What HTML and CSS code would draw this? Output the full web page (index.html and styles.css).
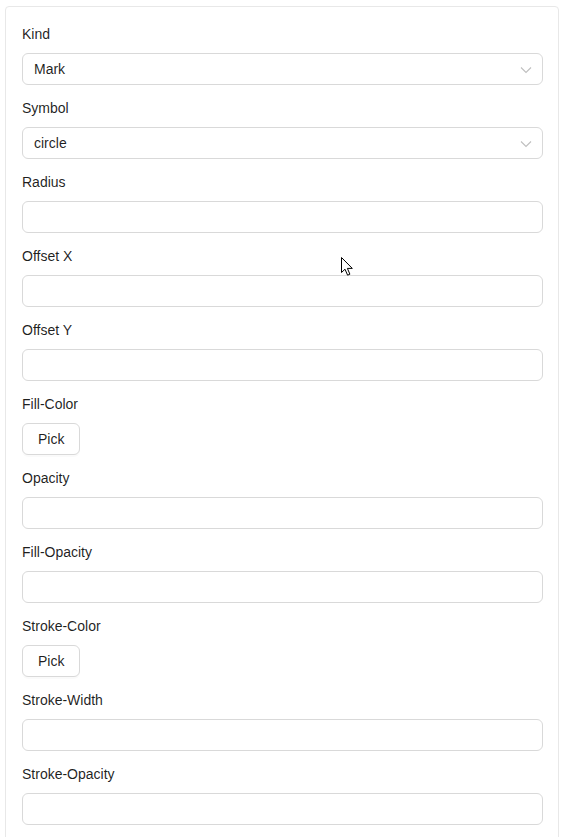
FILE: index.html
```html
<!DOCTYPE html>
<html>
<head>
<meta charset="utf-8">
<link rel="stylesheet" href="styles.css">
</head>
<body>
<div class="page">
  <form class="card">
    <div class="field">
      <label class="label">Kind</label>
      <div class="select"><span>Mark</span><svg class="chev" width="12" height="8" viewBox="0 0 12 8"><path d="M1 1.5 L6 6.5 L11 1.5" fill="none" stroke="#bfbfbf" stroke-width="1.1"/></svg></div>
    </div>
    <div class="field">
      <label class="label">Symbol</label>
      <div class="select"><span>circle</span><svg class="chev" width="12" height="8" viewBox="0 0 12 8"><path d="M1 1.5 L6 6.5 L11 1.5" fill="none" stroke="#bfbfbf" stroke-width="1.1"/></svg></div>
    </div>
    <div class="field"><label class="label">Radius</label><input class="input" type="text"></div>
    <div class="field"><label class="label">Offset X</label><input class="input" type="text"></div>
    <div class="field"><label class="label">Offset Y</label><input class="input" type="text"></div>
    <div class="field"><label class="label">Fill-Color</label><div><button type="button" class="btn">Pick</button></div></div>
    <div class="field"><label class="label">Opacity</label><input class="input" type="text"></div>
    <div class="field"><label class="label">Fill-Opacity</label><input class="input" type="text"></div>
    <div class="field"><label class="label">Stroke-Color</label><div><button type="button" class="btn">Pick</button></div></div>
    <div class="field"><label class="label">Stroke-Width</label><input class="input" type="text"></div>
    <div class="field"><label class="label">Stroke-Opacity</label><input class="input" type="text"></div>
  </form>
  <svg class="cursor" width="14" height="20" viewBox="0 0 14 20"><path d="M0.5 0.5 L0.5 15.5 L4 12.2 L6.6 18.2 L8.9 17.2 L6.4 11.4 L11.3 11.4 Z" fill="#fff" stroke="#000" stroke-width="1" stroke-linejoin="miter"/></svg>
</div>
</body>
</html>
```
FILE: styles.css
```css
* { box-sizing: border-box; }
html, body { margin: 0; padding: 0; background: #fff; }
body { font-family: "Liberation Sans", Arial, sans-serif; font-size: 14px; color: rgba(0,0,0,0.88); }
.page { position: relative; padding: 6px 5px; }
.card {
  border: 1px solid #e8e8e8;
  border-radius: 4px;
  padding: 16px 15px 0 16px;
  display: flex;
  flex-direction: column;
  gap: 12px;
  min-height: 860px;
}
.field { display: flex; flex-direction: column; }
.label { display: block; line-height: 22px; margin-bottom: 8px; }
.input, .select {
  height: 32px;
  width: 100%;
  border: 1px solid #d9d9d9;
  border-radius: 6px;
  background: #fff;
  font: inherit;
  padding: 0 11px;
}
.select { display: flex; align-items: center; justify-content: space-between; }
.chev { margin-right: -1px; margin-top: 1px; }
.btn {
  height: 32px;
  padding: 0 15px;
  border: 1px solid #d9d9d9;
  border-radius: 6px;
  background: #fff;
  font-family: "Liberation Sans", Arial, sans-serif;
  font-size: 14px;
  color: rgba(0,0,0,0.88);
  box-shadow: 0 2px 0 rgba(0,0,0,0.02);
}
.cursor { position: absolute; left: 341px; top: 257px; }
```
